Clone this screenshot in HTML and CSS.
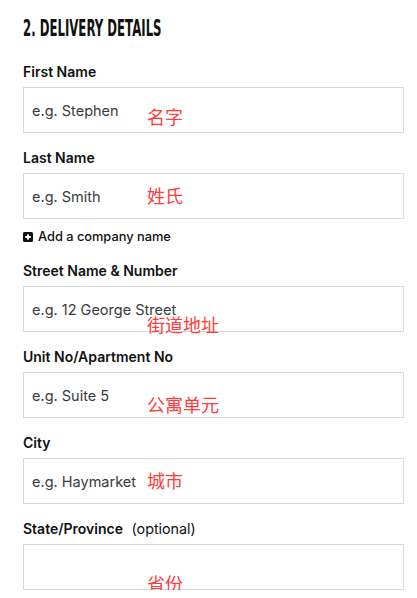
FILE: index.html
```html
<!DOCTYPE html>
<html>
<head>
<meta charset="utf-8">
<link rel="stylesheet" href="styles.css">
</head>
<body>
<div class="form">
  <h2 class="title"><span class="title-text">2. DELIVERY DETAILS</span></h2>

  <div class="field">
    <label class="label">First Name</label>
    <div class="box"><input class="input" placeholder="e.g. Stephen"><span class="note n1">名字</span></div>
  </div>

  <div class="field">
    <label class="label">Last Name</label>
    <div class="box"><input class="input" placeholder="e.g. Smith"><span class="note n2">姓氏</span></div>
  </div>

  <div class="add">
    <svg class="plus" width="10" height="10" viewBox="0 0 10 10"><rect x="0" y="0" width="10" height="10" rx="1.5" fill="#111"/><path d="M5 2.2v5.6M2.2 5h5.6" stroke="#fff" stroke-width="1.8"/></svg>
    <span>Add a company name</span>
  </div>

  <div class="field">
    <label class="label">Street Name &amp; Number</label>
    <div class="box"><input class="input" placeholder="e.g. 12 George Street"><span class="note n3">街道地址</span></div>
  </div>

  <div class="field">
    <label class="label">Unit No/Apartment No</label>
    <div class="box"><input class="input" placeholder="e.g. Suite 5"><span class="note n4">公寓单元</span></div>
  </div>

  <div class="field">
    <label class="label">City</label>
    <div class="box"><input class="input" placeholder="e.g. Haymarket"><span class="note n5">城市</span></div>
  </div>

  <div class="field">
    <label class="label">State/Province <span class="opt">(optional)</span></label>
    <div class="box"><input class="input" placeholder=""><span class="note n6">省份</span></div>
  </div>
</div>
</body>
</html>
```

FILE: styles.css
```css
html, body {
  margin: 0;
  padding: 0;
  background: #fff;
}
body {
  font-family: Inter, "Noto Sans", sans-serif;
  color: #111;
  overflow: hidden;
}
.form {
  padding: 15px 13px 0 23px;
  width: 381px;
}
.title {
  margin: 0;
  font-family: "DejaVu Sans", sans-serif;
  font-weight: 700;
  font-size: 23px;
  line-height: 26px;
  color: #111;
  white-space: nowrap;
}
.title-text {
  display: inline-block;
  transform: scaleX(0.51);
  transform-origin: 0 50%;
}
.field {
  margin-top: 15px;
}
.title + .field {
  margin-top: 21px;
}
.label {
  display: block;
  font-size: 14px;
  font-weight: 600;
  line-height: 20px;
  margin-bottom: 5px;
  color: #111;
}
.opt {
  font-weight: 400;
  margin-left: 5px;
  font-size: 14.3px;
}
.box {
  position: relative;
  height: 46px;
}
.input {
  box-sizing: border-box;
  width: 100%;
  height: 46px;
  margin: 0;
  border: 1px solid #d9d9d9;
  border-radius: 0;
  padding: 0 0 0 8px;
  font-family: Inter, "Noto Sans", sans-serif;
  font-size: 14.5px;
  color: #333;
  background: #fff;
  outline: none;
}
.input::placeholder {
  color: #3a3a3a;
  opacity: 1;
}
.note {
  position: absolute;
  left: 124px;
  font-family: "Noto Sans CJK SC", sans-serif;
  font-size: 18px;
  line-height: 18px;
  color: #ff3b3b;
  pointer-events: none;
}
.n1 { top: 20px; }
.n2 { top: 13px; }
.n3 { top: 29px; }
.n4 { top: 23px; }
.n5 { top: 13px; }
.n6 { top: 30px; }
.add {
  display: flex;
  align-items: center;
  gap: 5px;
  margin-top: 11px;
  font-size: 12.8px;
  font-weight: 500;
  line-height: 14px;
  color: #111;
}
.plus {
  display: block;
}
.add + .field {
  margin-top: 17px;
}
```
